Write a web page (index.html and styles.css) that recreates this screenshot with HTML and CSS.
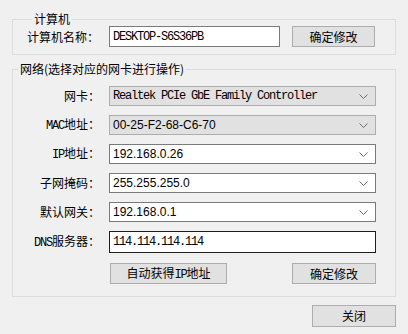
FILE: index.html
```html
<!DOCTYPE html>
<html lang="zh-CN">
<head>
<meta charset="utf-8">
<title>网络设置</title>
<link rel="stylesheet" href="styles.css">
</head>
<body>
<div class="dialog">
  <fieldset class="group group-pc">
    <legend class="group-title">计算机</legend>
    <div class="pc-row">
      <span class="label pc-label">计算机名称：</span>
      <div class="field mono">DESKTOP-S6S36PB</div>
      <button class="btn btn-pc">确定修改</button>
    </div>
  </fieldset>

  <fieldset class="group group-net">
    <legend class="group-title">网络(选择对应的网卡进行操作)</legend>
    <div class="net-grid">
      <span class="label">网卡：</span>
      <div class="combo combo-disabled"><span class="mono">Realtek PCIe GbE Family Controller</span><svg class="chev" width="9" height="5" viewBox="0 0 9 5"><polyline points="0.5,0.5 4.5,4.5 8.5,0.5" fill="none" stroke="#6d6d6d" stroke-width="1"/></svg></div>

      <span class="label"><span class="lat">MAC</span>地址：</span>
      <div class="combo combo-disabled"><span class="sans">00-25-F2-68-C6-70</span><svg class="chev" width="9" height="5" viewBox="0 0 9 5"><polyline points="0.5,0.5 4.5,4.5 8.5,0.5" fill="none" stroke="#6d6d6d" stroke-width="1"/></svg></div>

      <span class="label"><span class="lat">IP</span>地址：</span>
      <div class="combo"><span class="sans">192.168.0.26</span><svg class="chev" width="9" height="5" viewBox="0 0 9 5"><polyline points="0.5,0.5 4.5,4.5 8.5,0.5" fill="none" stroke="#6d6d6d" stroke-width="1"/></svg></div>

      <span class="label">子网掩码：</span>
      <div class="combo"><span class="sans">255.255.255.0</span><svg class="chev" width="9" height="5" viewBox="0 0 9 5"><polyline points="0.5,0.5 4.5,4.5 8.5,0.5" fill="none" stroke="#6d6d6d" stroke-width="1"/></svg></div>

      <span class="label">默认网关：</span>
      <div class="combo"><span class="sans">192.168.0.1</span><svg class="chev" width="9" height="5" viewBox="0 0 9 5"><polyline points="0.5,0.5 4.5,4.5 8.5,0.5" fill="none" stroke="#6d6d6d" stroke-width="1"/></svg></div>

      <span class="label"><span class="lat">DNS</span>服务器：</span>
      <div class="field field-dns mono">114.114.114.114</div>

      <div class="net-buttons">
        <button class="btn btn-auto">自动获得<span class="lat">IP</span>地址</button>
        <button class="btn btn-apply">确定修改</button>
      </div>
    </div>
  </fieldset>

  <div class="footer">
    <button class="btn btn-close">关闭</button>
  </div>
</div>
</body>
</html>
```

FILE: styles.css
```css
html, body {
  margin: 0;
  padding: 0;
  background: #f0f0f0;
}

body {
  font-family: "Noto Sans CJK SC", "Liberation Sans", sans-serif;
  font-size: 12px;
  color: #000;
}

.dialog {
  padding: 12px 12px 0 12px;
  width: 384px;
}

.group {
  margin: 0;
  border: 1px solid #dcdcdc;
  min-width: 0;
}

.group-title {
  margin-left: 5px;
  padding: 0 2px;
  line-height: 14px;
  font-size: 12px;
}

.group-pc {
  padding: 0 0 7px 14px;
}

.group-net {
  margin-top: 7px;
  padding: 10px 0 12px 0;
}

.label {
  line-height: 14px;
  white-space: nowrap;
}

.lat {
  font-family: "Liberation Mono", monospace;
  letter-spacing: -1.2px;
  font-size: 12px;
}

.mono {
  font-family: "Liberation Mono", monospace;
  font-size: 12px;
  letter-spacing: -1.2px;
}

.sans {
  font-family: "Liberation Sans", sans-serif;
  font-size: 12px;
}

.pc-row {
  display: flex;
  align-items: center;
}

.pc-label {
  width: 72px;
  margin-right: 10px;
}

.field {
  box-sizing: border-box;
  background: #fff;
  border: 1px solid #7a7a7a;
  height: 21px;
  padding: 0 3px;
  display: flex;
  align-items: center;
  white-space: nowrap;
  overflow: hidden;
}

.pc-row .field {
  width: 171px;
  margin-right: 12px;
}

.btn {
  box-sizing: border-box;
  background: #e1e1e1;
  border: 1px solid #adadad;
  height: 21px;
  padding: 0;
  margin: 0;
  font-family: "Noto Sans CJK SC", "Liberation Sans", sans-serif;
  font-size: 12px;
  line-height: 14px;
  color: #000;
}

.btn-pc {
  width: 83px;
}

.net-grid {
  display: grid;
  grid-template-columns: 87px 267px;
  column-gap: 9px;
  row-gap: 9px;
  align-items: center;
}

.net-grid .label {
  text-align: right;
}

.combo {
  box-sizing: border-box;
  height: 20px;
  border: 1px solid #7a7a7a;
  background: #fff;
  display: flex;
  align-items: center;
  justify-content: space-between;
  padding: 0 7px 0 3px;
  white-space: nowrap;
}

.combo-disabled {
  background: #e1e1e1;
  border-color: #adadad;
}

.chev {
  display: block;
  flex: none;
}

.field-dns {
  height: 22px;
  border-color: #1e1e1e;
}

.net-buttons {
  grid-column: 2;
  display: flex;
  justify-content: space-between;
  margin-top: 1px;
}

.btn-auto {
  width: 117px;
  margin-left: 1px;
}

.btn-apply {
  width: 84px;
}

.footer {
  display: flex;
  justify-content: flex-end;
  margin-top: 8px;
}

.btn-close {
  width: 84px;
  height: 22px;
}
```
